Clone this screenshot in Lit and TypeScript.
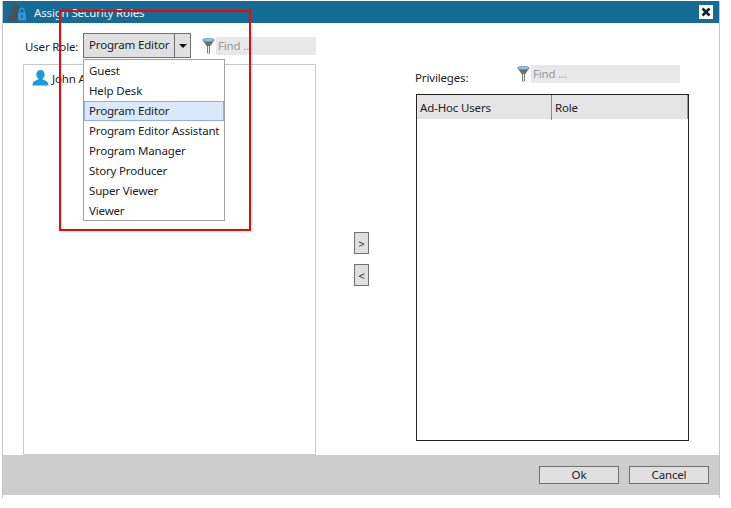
import { LitElement, html, css, svg } from "lit";
import { customElement } from "lit/decorators.js";

const funnel = svg`<svg class="funnel" width="13" height="16" viewBox="0 0 13 16"><path d="M0.5 2 L5 8.5 V15 Q6.5 16 8 15 V8.5 L12.5 2 Z" fill="#6f6f6f"/><path d="M6.5 8 V15" stroke="#f0f0f0" stroke-width="1.2"/><ellipse cx="6.5" cy="2" rx="6" ry="1.7" fill="#7cc6ee" stroke="#6f7f88" stroke-width="0.6"/></svg>`;

const ROLES = ["Guest", "Help Desk", "Program Editor", "Program Editor Assistant", "Program Manager", "Story Producer", "Super Viewer", "Viewer"];

@customElement("app-root")
export class AppRoot extends LitElement {
  static styles = css`
    :host { display: block; position: relative; width: 731px; height: 508px; background: #fff; overflow: hidden;
      font-family: "Noto Sans", "Open Sans", sans-serif; font-size: 11.5px; letter-spacing: -0.16px; color: #222; white-space: nowrap; }
    .dialog { position: relative; margin: 1px 0 0 2px; width: 718px; height: 497px; box-sizing: border-box;
      border-left: 1px solid #c4c4c4; border-right: 1px solid #c4c4c4; display: flex; flex-direction: column; }
    .title { height: 22px; background: #156a96; display: flex; align-items: center; color: #eef3f6; flex: none; padding-left: 3px; }
    .title .name { margin-left: 8px; }
    .title .close { margin-left: auto; margin-right: 6px; width: 14px; height: 14px; background: #fff; display: flex; align-items: center; justify-content: center; }
    .body { flex: 1; display: grid; grid-template-columns: 293px 100px 273px; padding: 10px 0 0 20px; min-height: 0; }
    .left { display: flex; flex-direction: column; min-height: 0; }
    .role-row { display: flex; align-items: flex-start; height: 31px; flex: none; }
    .label { width: 60px; flex: none; box-sizing: border-box; margin-top: 6px; padding-left: 2px; }
    .combo { display: flex; flex: none; width: 108px; height: 25px; box-sizing: border-box; border: 1px solid #707070; background: #e0e0e0; }
    .combo .val { flex: 1; padding: 0 5px; line-height: 22px; border-right: 1px solid #707070; }
    .combo .arrow { width: 16px; display: flex; align-items: center; justify-content: center; }
    .filter { display: flex; align-items: center; gap: 1px; height: 18px; }
    .find { background: #e8e8e8; height: 18px; line-height: 18px; color: #999; padding-left: 2px; box-sizing: border-box; }
    .left .filter { margin: 4px 0 0 11px; }
    .left .find { width: 100px; }
    .list { height: 391px; flex: none; border: 1px solid #c8c8c8; box-sizing: border-box; padding: 5px 8px; display: flex; align-items: center; align-content: flex-start; flex-wrap: wrap; gap: 3px; }
    .middle { display: flex; flex-direction: column; align-items: flex-start; padding: 199px 0 0 38px; gap: 10px; }
    .arrowbtn { width: 15px; height: 22px; box-sizing: border-box; border: 1px solid #707070; background: #e0e0e0; display: flex; align-items: center; justify-content: center; }
    .right { display: flex; flex-direction: column; }
    .priv-head { display: flex; height: 61px; margin-left: -1px; flex: none; }
    .priv-label { margin-top: 37px; width: 102px; }
    .right .filter { margin-top: 32px; }
    .right .find { width: 149px; }
    .table { border: 1px solid #222; box-sizing: border-box; height: 347px; width: 273px; flex: none; }
    .thead { display: grid; grid-template-columns: 135px 1fr; background: #e4e4e4; height: 24px; line-height: 25px; border-right: 1px solid #999; }
    .thead div { padding-left: 3px; }
    .thead div:first-child { border-right: 1px solid #888; }
    .footer { flex: none; height: 40px; background: #cdcdcd; display: flex; justify-content: flex-end; align-items: center; gap: 10px; padding-right: 10px; box-sizing: border-box; }
    .btn { width: 80px; height: 18px; box-sizing: border-box; border: 1px solid #707070; background: #e0e0e0; text-align: center; line-height: 16px; }
    .tail { height: 3px; flex: none; }
    .menu { position: absolute; left: 83px; top: 59px; width: 142px; height: 162px; box-sizing: border-box; border: 1px solid #a0a0a0; background: #fff; padding: 1px 0; z-index: 2; }
    .menu div { height: 20px; line-height: 20px; padding-left: 5px; box-sizing: border-box; }
    .menu .sel { background: #dbe8f9; border: 1px solid #8db3dd; line-height: 18px; padding-left: 4px; }
    .redbox { position: absolute; left: 59px; top: 10px; width: 192px; height: 221px; box-sizing: border-box; border: 2px solid #f00; z-index: 3; }
  `;

  render() {
    return html`
      <div class="dialog">
        <div class="title">
          <svg width="20" height="20" viewBox="0 0 20 20"><circle cx="9" cy="6" r="4" fill="#47525a"/><path d="M2 19 Q3 10 9 10 Q13 10 14 14 V19 Z" fill="#47525a"/><rect x="12" y="10.5" width="8" height="8" rx="0.5" fill="#2f96d8"/><path d="M13.8 11 V8.5 a2.2 2.2 0 0 1 4.4 0 V11" fill="none" stroke="#2f96d8" stroke-width="1.4"/><rect x="15.3" y="13" width="1.4" height="3" fill="#156a96"/></svg>
          <span class="name">Assign Security Roles</span>
          <span class="close"><svg width="10" height="10" viewBox="0 0 10 10"><path d="M1.5 1.5 L8.5 8.5 M8.5 1.5 L1.5 8.5" stroke="#13233a" stroke-width="2.6"/></svg></span>
        </div>
        <div class="body">
          <div class="left">
            <div class="role-row">
              <span class="label">User Role:</span>
              <div class="combo"><div class="val">Program Editor</div><div class="arrow"><svg width="8" height="4" viewBox="0 0 8 4"><path d="M0 0 H8 L4 4 Z" fill="#111"/></svg></div></div>
              <div class="filter">${funnel}<div class="find">Find ...</div></div>
            </div>
            <div class="list">
              <svg width="17" height="16" viewBox="0 0 17 16"><path d="M8.5 0 C5.8 0 4.4 2 4.4 4.4 C4.4 6.4 5.2 7.8 6.3 8.6 V9.6 C3.5 10.4 0.5 11.6 0.5 15.5 H16.5 C16.5 11.6 13.5 10.4 10.7 9.6 V8.6 C11.8 7.8 12.6 6.4 12.6 4.4 C12.6 2 11.2 0 8.5 0 Z" fill="#1f9ae0"/></svg>
              <span>John A</span>
            </div>
          </div>
          <div class="middle">
            <div class="arrowbtn">&gt;</div>
            <div class="arrowbtn">&lt;</div>
          </div>
          <div class="right">
            <div class="priv-head">
              <span class="priv-label">Privileges:</span>
              <div class="filter">${funnel}<div class="find">Find ...</div></div>
            </div>
            <div class="table">
              <div class="thead"><div>Ad-Hoc Users</div><div>Role</div></div>
            </div>
          </div>
        </div>
        <div class="footer"><div class="btn">Ok</div><div class="btn">Cancel</div></div>
        <div class="tail"></div>
      </div>
      <div class="menu">${ROLES.map((r) => html`<div class=${r === "Program Editor" ? "sel" : ""}>${r}</div>`)}</div>
      <div class="redbox"></div>
    `;
  }
}
